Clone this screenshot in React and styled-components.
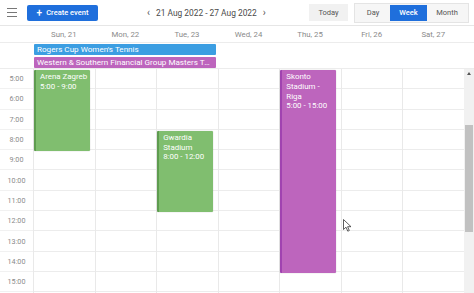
import React from 'react';
import styled, { createGlobalStyle } from 'styled-components';

const GlobalStyle = createGlobalStyle`
    html, body {
        margin: 0;
        padding: 0;
        background: #ffffff;
        overflow: hidden;
    }
    body {
        font-family: Roboto, "Liberation Sans", Arial, sans-serif;
    }
`;

const HOUR_HEIGHT = 20.3;
const FIRST_HOUR = 5;
const HOURS = [5, 6, 7, 8, 9, 10, 11, 12, 13, 14, 15];
const DAYS = ['Sun, 21', 'Mon, 22', 'Tue, 23', 'Wed, 24', 'Thu, 25', 'Fri, 26', 'Sat, 27'];

const COLORS = {
    green: { bg: '#80be6f', edge: '#5e9c4f' },
    purple: { bg: '#bd65bd', edge: '#a043b0' },
    blue: { bg: '#3c9ee2', edge: '#3c9ee2' }
};

const EVENTS = [
    { day: 0, start: 5, end: 9, lines: ['Arena Zagreb', '5:00 - 9:00'], color: 'green' },
    { day: 2, start: 8, end: 12, lines: ['Gwardia', 'Stadium', '8:00 - 12:00'], color: 'green' },
    { day: 4, start: 5, end: 15, lines: ['Skonto', 'Stadium -', 'Riga', '5:00 - 15:00'], color: 'purple' }
];

const ALL_DAY = [
    { title: 'Rogers Cup Women\'s Tennis', color: 'blue' },
    { title: 'Western & Southern Financial Group Masters Tennis', color: 'purple' }
];

const Page = styled.div`
    position: relative;
    width: 474px;
    height: 293px;
    display: flex;
    flex-direction: column;
    overflow: hidden;
`;

const Toolbar = styled.div`
    height: 26px;
    flex: none;
    box-sizing: border-box;
    display: flex;
    align-items: center;
    padding: 0 7px;
    border-bottom: 1px solid #e6e6e6;
`;

const Burger = styled.div`
    width: 10px;
    display: flex;
    flex-direction: column;
    gap: 3px;
    margin-right: 10px;
    span {
        display: block;
        height: 1px;
        background: #777;
    }
`;

const CreateButton = styled.button`
    height: 16px;
    width: 71px;
    border: none;
    border-radius: 2px;
    background: #1f6fdc;
    color: #fff;
    font: 500 7.5px Roboto, "Liberation Sans", sans-serif;
    display: flex;
    align-items: center;
    justify-content: center;
    gap: 4px;
    padding: 0;
    b {
        font-size: 10px;
        font-weight: 500;
        line-height: 1;
    }
`;

const Nav = styled.div`
    display: flex;
    align-items: center;
    margin-left: 48px;
    color: #4a4a4a;
    font-size: 8.4px;
    gap: 5px;
`;

const Arrow = styled.span`
    font-size: 10px;
    color: #555;
    padding: 0 1px;
`;

const Spacer = styled.div`
    flex: 1;
`;

const TodayButton = styled.div`
    width: 39px;
    height: 17px;
    background: #f1f1f1;
    color: #555;
    font-size: 7.5px;
    display: flex;
    align-items: center;
    justify-content: center;
    margin-right: 6px;
`;

const Segmented = styled.div`
    display: flex;
    height: 20px;
    box-sizing: border-box;
    border: 1px solid #e4e4e4;
    background: #f6f6f6;
    padding: 1px;
    margin-right: -2px;
`;

const Segment = styled.div`
    width: ${p => p.$w}px;
    display: flex;
    align-items: center;
    justify-content: center;
    font-size: 7.5px;
    font-weight: ${p => (p.$active ? 500 : 400)};
    color: ${p => (p.$active ? '#fff' : '#555')};
    background: ${p => (p.$active ? '#1f6fdc' : 'transparent')};
`;

const DayHeader = styled.div`
    flex: none;
    height: 16px;
    display: grid;
    grid-template-columns: 33px repeat(7, 1fr) 10px;
    align-items: center;
    border-bottom: 1px solid #ececec;
    color: #8a8a8a;
    font-size: 7.8px;
`;

const DayName = styled.div`
    text-align: center;
`;

const AllDay = styled.div`
    flex: none;
    height: 26px;
    box-sizing: border-box;
    padding: 1px 0 0 34px;
    display: flex;
    flex-direction: column;
    gap: 2px;
    border-bottom: 1px solid #ececec;
`;

const AllDayBar = styled.div`
    width: 182px;
    height: 11px;
    box-sizing: border-box;
    padding: 0 3px 0 3px;
    background: ${p => COLORS[p.$color].bg};
    color: #fff;
    font-size: 8.1px;
    line-height: 11px;
    white-space: nowrap;
    overflow: hidden;
    text-overflow: ellipsis;
    border-radius: 1px;
`;

const Body = styled.div`
    flex: 1;
    display: flex;
    min-height: 0;
`;

const Grid = styled.div`
    flex: 1;
    display: grid;
    grid-template-columns: 33px repeat(7, 1fr);
    overflow: hidden;
`;

const TimeColumn = styled.div`
    display: flex;
    flex-direction: column;
`;

const TimeLabel = styled.div`
    flex: none;
    height: ${HOUR_HEIGHT}px;
    display: flex;
    align-items: center;
    justify-content: center;
    color: #8a8a8a;
    font-size: 7.2px;
    box-sizing: border-box;
    border-bottom: 1px solid #f1f1f1;
`;

const DayColumn = styled.div`
    position: relative;
    border-left: 1px solid #e9e9e9;
    display: flex;
    flex-direction: column;
`;

const Slot = styled.div`
    flex: none;
    height: ${HOUR_HEIGHT}px;
    box-sizing: border-box;
    border-bottom: 1px solid #ececec;
`;

const EventBox = styled.div`
    position: absolute;
    left: 0;
    width: 56px;
    box-sizing: border-box;
    padding: 2px 1px 2px 4px;
    background: ${p => COLORS[p.$color].bg};
    border-left: 2px solid ${p => COLORS[p.$color].edge};
    border-radius: 1px;
    color: #fff;
    font-size: 7.9px;
    line-height: 9.8px;
    white-space: nowrap;
    box-shadow: 0 0 0 0.5px rgba(0, 0, 0, 0.08);
`;

const Scrollbar = styled.div`
    width: 10px;
    flex: none;
    background: #f1f1f1;
    position: relative;
`;

const ScrollArrow = styled.div`
    position: absolute;
    top: 3px;
    left: 3px;
    width: 0;
    height: 0;
    border-left: 2px solid transparent;
    border-right: 2px solid transparent;
    border-bottom: 3px solid #555;
`;

const ScrollThumb = styled.div`
    position: absolute;
    top: 56px;
    left: 1px;
    width: 8px;
    height: 107px;
    background: #c1c1c1;
`;

const Cursor = styled.svg`
    position: absolute;
    left: 343px;
    top: 219px;
    pointer-events: none;
`;

const DayCell = ({ index }) => {
    const events = EVENTS.filter(e => e.day === index);
    return (
        <DayColumn>
            {HOURS.map(h => <Slot key={h} />)}
            {events.map(e => (
                <EventBox
                    key={e.lines[0]}
                    $color={e.color}
                    style={{
                        top: (e.start - FIRST_HOUR) * HOUR_HEIGHT + 1,
                        height: (e.end - e.start) * HOUR_HEIGHT
                    }}
                >
                    {e.lines.map(l => <div key={l}>{l}</div>)}
                </EventBox>
            ))}
        </DayColumn>
    );
};

export default function App() {
    return (
        <Page>
            <GlobalStyle />
            <Toolbar>
                <Burger><span /><span /><span /></Burger>
                <CreateButton><b>+</b>Create event</CreateButton>
                <Nav>
                    <Arrow>‹</Arrow>
                    <span>21 Aug 2022 - 27 Aug 2022</span>
                    <Arrow>›</Arrow>
                </Nav>
                <Spacer />
                <TodayButton>Today</TodayButton>
                <Segmented>
                    <Segment $w={34}>Day</Segment>
                    <Segment $w={37} $active>Week</Segment>
                    <Segment $w={40}>Month</Segment>
                </Segmented>
            </Toolbar>
            <DayHeader>
                <div />
                {DAYS.map(d => <DayName key={d}>{d}</DayName>)}
                <div />
            </DayHeader>
            <AllDay>
                {ALL_DAY.map(a => (
                    <AllDayBar key={a.title} $color={a.color}>{a.title}</AllDayBar>
                ))}
            </AllDay>
            <Body>
                <Grid>
                    <TimeColumn>
                        {HOURS.map(h => <TimeLabel key={h}>{h}:00</TimeLabel>)}
                    </TimeColumn>
                    {DAYS.map((d, i) => <DayCell key={d} index={i} />)}
                </Grid>
                <Scrollbar>
                    <ScrollArrow />
                    <ScrollThumb />
                </Scrollbar>
            </Body>
            <Cursor width="9" height="13" viewBox="0 0 9 13">
                <path d="M0.5 0.5 L0.5 10.5 L3 8.2 L4.8 12.2 L6.3 11.5 L4.6 7.7 L8 7.7 Z" fill="#fff" stroke="#333" strokeWidth="0.8" strokeLinejoin="round" />
            </Cursor>
        </Page>
    );
}
